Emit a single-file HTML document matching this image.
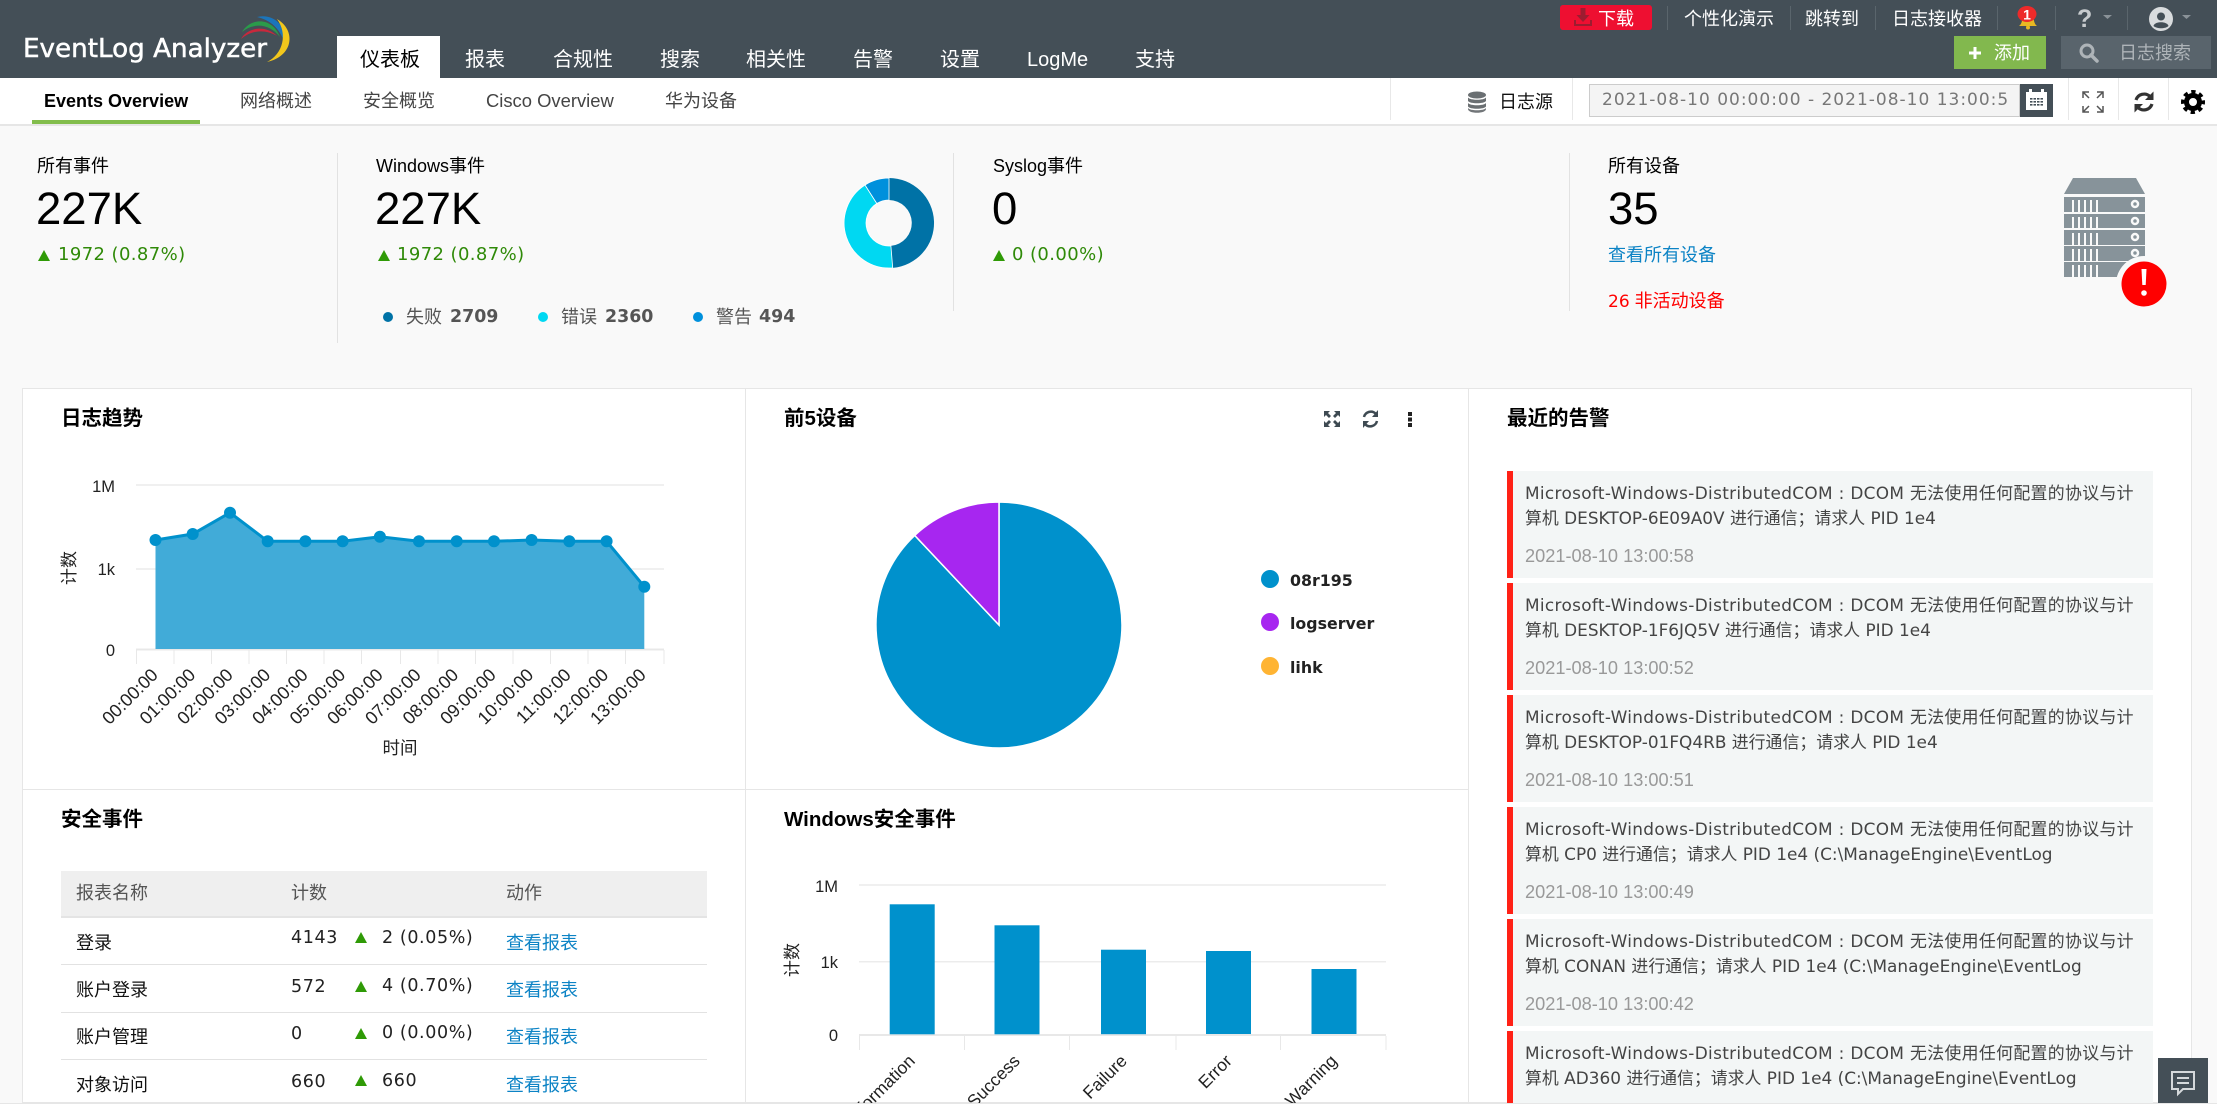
<!DOCTYPE html>
<html lang="zh">
<head>
<meta charset="utf-8">
<title>EventLog Analyzer</title>
<style>
html,body{margin:0;padding:0;background:#f9f9f9}
body{position:relative;width:2217px;height:1109px;overflow:hidden;font-family:"Liberation Sans","Noto Sans CJK SC",sans-serif;color:#000}
.a{position:absolute}
.t{position:absolute;white-space:nowrap;line-height:24px;height:24px;font-size:18px}
.n{color:#fff;font-size:20px;top:48px}
.s{color:#444;font-size:18px;top:89px}
.w{color:#fff;font-size:18px;top:7px}
.v{width:1px;background:#5a656c;top:6px;height:24px}
.sv{width:1px;background:#e8e8e8;top:78px;height:42px}
.big{font-size:45.500px;line-height:50px;height:50px;top:184px}
.g{font-family:"DejaVu Sans",sans-serif;color:#2f8a08;font-size:18px;letter-spacing:.4px;top:243px}
.tri{position:absolute;width:0;height:0;border-left:6.5px solid transparent;border-right:6.5px solid transparent;border-bottom:11px solid #2f9a06}
.h{font-size:20.5px;font-weight:bold}
.lg{font-size:18px;color:#555}
.lb{font-family:"DejaVu Sans",sans-serif;font-weight:bold;font-size:17.4px;color:#555}
.dot{position:absolute;border-radius:50%}
.item{position:absolute;left:1507px;width:646px;height:107px;background:#f3f6f6;box-sizing:border-box;border-left:6px solid #ff2116}
.item div{position:absolute;left:12px;white-space:nowrap;font-family:"DejaVu Sans","Noto Sans CJK SC",sans-serif;font-size:16.9px;line-height:24px;color:#444}
.item .l1{top:10px;letter-spacing:.33px}.item .l2{top:35px}.item .l3{top:73px;color:#999;font-family:"Liberation Sans",sans-serif;font-size:18.2px}
.row{font-size:18px;color:#111}
.num{font-family:"DejaVu Sans",sans-serif;font-size:17.500px;letter-spacing:.6px;color:#222}
.lnk{color:#0c83c5}
svg text{font-family:"Liberation Sans","Noto Sans CJK SC",sans-serif}
</style>
</head>
<body>
<!-- header -->
<div class="a" style="left:0;top:0;width:2217px;height:78px;background:#444f57"></div>
<svg class="a" style="left:0;top:0" width="320" height="78">
<text x="23" y="57" font-size="25.5" fill="#fff" stroke="#fff" stroke-width=".5" style="font-family:'DejaVu Sans',sans-serif" textLength="244" lengthAdjust="spacingAndGlyphs">EventLog Analyzer</text>
<path d="M241 39C247 28 265 24 277 36C265 29 251 30 241 39Z" fill="#c8283c"/>
<path d="M242 32C250 18 272 16 280 37C270 24 254 22 242 32Z" fill="#2a9b4a"/>
<path d="M257 17C272 13 288 25 285 44C280 28 270 20 257 17Z" fill="#1b75bb"/>
<path d="M277 19C296 30 294 56 267 62C283 54 288 34 277 19Z" fill="#f2c71c"/>
</svg>
<div class="a" style="left:337px;top:36px;width:103px;height:42px;background:#fff"></div>
<div class="t n" style="left:360px;color:#000">仪表板</div>
<div class="t n" style="left:465px">报表</div>
<div class="t n" style="left:553px">合规性</div>
<div class="t n" style="left:660px">搜索</div>
<div class="t n" style="left:746px">相关性</div>
<div class="t n" style="left:853px">告警</div>
<div class="t n" style="left:940px">设置</div>
<div class="t n" style="left:1027px">LogMe</div>
<div class="t n" style="left:1135px">支持</div>

<div class="a" style="left:1560px;top:5px;width:92px;height:25px;background:#ee0f31;border-radius:3px"></div>
<svg class="a" style="left:1572px;top:7px" width="24" height="22"><path d="M8.500 1h5v7h4l-6.500 7-6.500-7h4z M2 13v6h18v-6h-2v4H4v-4z" fill="#9c1c30"/></svg>
<div class="t w" style="left:1598px">下载</div>
<div class="a v" style="left:1667px"></div>
<div class="t w" style="left:1684px">个性化演示</div>
<div class="a v" style="left:1790px"></div>
<div class="t w" style="left:1805px">跳转到</div>
<div class="a v" style="left:1875px"></div>
<div class="t w" style="left:1892px">日志接收器</div>
<div class="a v" style="left:1997px"></div>
<svg class="a" style="left:2010px;top:2px" width="34" height="30">
<path d="M9 24c3-2 3-6 4-10h10c1 4 1 8 4 10z" fill="#e8b923"/><circle cx="18" cy="25.500" r="2" fill="#e8b923"/>
<ellipse cx="17" cy="12" rx="9.500" ry="8" fill="#ee2a2a"/>
<text x="17" y="17.500" fill="#fff" font-size="14" font-weight="bold" text-anchor="middle">1</text>
</svg>
<div class="a v" style="left:2055px"></div>
<div class="t" style="left:2077px;top:7px;color:#c6cacd;font-size:25px;font-weight:bold">?</div>
<svg class="a" style="left:2102px;top:14px" width="12" height="8"><path d="M1 1h9L5.500 5z" fill="#8a9298"/></svg>
<div class="a v" style="left:2127px"></div>
<svg class="a" style="left:2148px;top:6px" width="26" height="26"><circle cx="13" cy="13" r="12" fill="#d9dcde"/><circle cx="13" cy="10.500" r="4" fill="#444f57"/><path d="M5.500 20c1-5 14-5 15 0-3 3-12 3-15 0z" fill="#444f57"/></svg>
<svg class="a" style="left:2181px;top:14px" width="12" height="8"><path d="M1 1h9L5.500 5z" fill="#8a9298"/></svg>

<div class="a" style="left:1954px;top:36px;width:92px;height:33px;background:#82b84e"></div>
<svg class="a" style="left:1968px;top:46px" width="14" height="14"><path d="M5.500 1h3v4.500H13v3H8.500V13h-3V8.500H1v-3h4.500z" fill="#fff"/></svg>
<div class="t" style="left:1994px;top:41px;color:#fff;font-size:18px">添加</div>
<div class="a" style="left:2061px;top:36px;width:150px;height:33px;background:#59646c"></div>
<svg class="a" style="left:2078px;top:42px" width="22" height="22"><circle cx="9" cy="9" r="6" fill="none" stroke="#aeb4b8" stroke-width="3"/><path d="M13 13l6 6" stroke="#aeb4b8" stroke-width="3.500" stroke-linecap="round"/></svg>
<div class="t" style="left:2119px;top:41px;color:#aeb4b8;font-size:18px">日志搜索</div>

<!-- subnav -->
<div class="a" style="left:0;top:78px;width:2217px;height:46px;background:#fff;border-bottom:2px solid #e6e6e6;box-sizing:content-box"></div>
<div class="a" style="left:32px;top:120px;width:168px;height:4px;background:#82bd4c"></div>
<div class="t" style="left:44px;top:89px;font-size:18px;font-weight:bold">Events Overview</div>
<div class="t s" style="left:240px">网络概述</div>
<div class="t s" style="left:363px">安全概览</div>
<div class="t s" style="left:486px;font-size:18.400px">Cisco Overview</div>
<div class="t s" style="left:665px">华为设备</div>
<div class="a sv" style="left:1390px"></div>
<svg class="a" style="left:1466px;top:90px" width="22" height="24" fill="#6a6f72"><ellipse cx="11" cy="5" rx="9" ry="3.500"/><path d="M2 7.500c2 3 16 3 18 0v3.500c-2 3-16 3-18 0z M2 13c2 3 16 3 18 0v3.500c-2 3-16 3-18 0z"/><path d="M2 18c2 3 16 3 18 0v1c0 5-18 5-18 0z" opacity=".95"/></svg>
<div class="t" style="left:1499px;top:90px;font-size:18px;color:#111">日志源</div>
<div class="a sv" style="left:1572px"></div>
<div class="a" style="left:1589px;top:84px;width:431px;height:33px;background:#f4f4f4;border:1px solid #ccc;box-sizing:border-box"></div>
<div class="t" style="left:1602px;top:88px;font-family:'DejaVu Sans',sans-serif;font-size:17px;letter-spacing:1px;color:#777;width:407px;overflow:hidden">2021-08-10 00:00:00 - 2021-08-10 13:00:5</div>
<div class="a" style="left:2020px;top:84px;width:33px;height:33px;background:#444f57"></div>
<svg class="a" style="left:2025px;top:88px" width="23" height="23"><path d="M1 4h3V1h3v3h9V1h3v3h3v18H1z" fill="#fff"/><path d="M3 8.500h17v11H3z" fill="#fff"/><g fill="#444f57"><rect x="5" y="10" width="13" height="1.600"/><rect x="5" y="13" width="13" height="1.600"/><rect x="5" y="16" width="13" height="1.600"/></g><g stroke="#fff" stroke-width="1"><path d="M8 10v8M11.500 10v8M15 10v8"/></g></svg>
<div class="a sv" style="left:2068px"></div>
<svg class="a" style="left:2081px;top:90px" width="24" height="24" fill="none" stroke="#555" stroke-width="1.500"><path d="M2 8V2h6M2 2l6 6M16 2h6v6M22 2l-6 6M2 16v6h6M2 22l6-6M22 16v6h-6M22 22l-6-6"/></svg>
<div class="a sv" style="left:2118px"></div>
<svg class="a" style="left:2132px;top:90px" width="24" height="24" fill="none" stroke="#333" stroke-width="3.200"><path d="M4 10a8.500 8.500 0 0 1 14-3.500"/><path d="M20 14a8.500 8.500 0 0 1-14 3.500"/><path d="M21.500 1.500v8.500h-8.500z M2.500 22.500v-8.500h8.500z" fill="#333" stroke="none"/></svg>
<div class="a sv" style="left:2168px"></div>
<svg class="a" style="left:2180px;top:89px" width="26" height="26"><circle cx="13" cy="13" r="6.500" fill="none" stroke="#000" stroke-width="5"/><circle cx="13" cy="13" r="10" fill="none" stroke="#000" stroke-width="4" stroke-dasharray="4.200 3.650" stroke-dashoffset="2"/></svg>

<!-- stats -->
<div class="t" style="left:37px;top:154px">所有事件</div>
<div class="t big" style="left:36px">227K</div>
<div class="tri" style="left:38px;top:250px"></div>
<div class="t g" style="left:58px">1972 (0.87%)</div>
<div class="a" style="left:337px;top:153px;width:1px;height:190px;background:#e2e2e2"></div>

<div class="t" style="left:376px;top:154px">Windows事件</div>
<div class="t big" style="left:375px">227K</div>
<div class="tri" style="left:378px;top:250px"></div>
<div class="t g" style="left:397px">1972 (0.87%)</div>
<svg class="a" style="left:840px;top:174px" width="98" height="98">
<g transform="translate(49 49)">
<path d="M0-45A45 45 0 0 1 3.700 44.850L1.900 22.900A23 23 0 0 0 0-23Z" fill="#0072a6"/>
<path d="M3.700 44.850A45 45 0 0 1-24 -38L-12.200-19.500A23 23 0 0 0 1.900 22.900Z" fill="#00d8f2" stroke="#fff" stroke-width=".8"/>
<path d="M-24-38A45 45 0 0 1 0-45L0-23A23 23 0 0 0-12.200-19.500Z" fill="#0090dc" stroke="#fff" stroke-width=".8"/>
</g></svg>
<div class="dot" style="left:383px;top:312px;width:10px;height:10px;background:#0072a6"></div>
<div class="t lg" style="left:406px;top:305px">失败</div>
<div class="t lb" style="left:450px;top:305px">2709</div>
<div class="dot" style="left:538px;top:312px;width:10px;height:10px;background:#00d8f2"></div>
<div class="t lg" style="left:561px;top:305px">错误</div>
<div class="t lb" style="left:605px;top:305px">2360</div>
<div class="dot" style="left:693px;top:312px;width:10px;height:10px;background:#0090dc"></div>
<div class="t lg" style="left:716px;top:305px">警告</div>
<div class="t lb" style="left:759px;top:305px">494</div>
<div class="a" style="left:953px;top:153px;width:1px;height:158px;background:#e2e2e2"></div>

<div class="t" style="left:993px;top:154px">Syslog事件</div>
<div class="t big" style="left:992px">0</div>
<div class="tri" style="left:993px;top:250px"></div>
<div class="t g" style="left:1012px">0 (0.00%)</div>
<div class="a" style="left:1569px;top:153px;width:1px;height:158px;background:#e2e2e2"></div>

<div class="t" style="left:1608px;top:154px">所有设备</div>
<div class="t big" style="left:1608px">35</div>
<div class="t lnk" style="left:1608px;top:243px">查看所有设备</div>
<div class="t" style="left:1608px;top:289px;color:#f00"><span style="font-family:'DejaVu Sans',sans-serif;font-size:17px">26</span> 非活动设备</div>
<svg class="a" style="left:2060px;top:174px" width="120" height="140">
<g fill="#87939a">
<path d="M13 4H76L85 20H4Z"/>
<rect x="4" y="23" width="81" height="15"/><rect x="4" y="40" width="81" height="14"/><rect x="4" y="56" width="81" height="15"/><rect x="4" y="72" width="81" height="15"/><rect x="4" y="88" width="81" height="15"/>
</g>
<g fill="#f9f9f9">
<g id="b"><rect x="12" y="26" width="2" height="12"/><rect x="18" y="26" width="2" height="12"/><rect x="24" y="26" width="2" height="12"/><rect x="30" y="26" width="2" height="12"/><rect x="36" y="26" width="2" height="12"/></g>
<rect x="12" y="43" width="2" height="11"/><rect x="18" y="43" width="2" height="11"/><rect x="24" y="43" width="2" height="11"/><rect x="30" y="43" width="2" height="11"/><rect x="36" y="43" width="2" height="11"/>
<rect x="12" y="59" width="2" height="12"/><rect x="18" y="59" width="2" height="12"/><rect x="24" y="59" width="2" height="12"/><rect x="30" y="59" width="2" height="12"/><rect x="36" y="59" width="2" height="12"/>
<rect x="12" y="75" width="2" height="12"/><rect x="18" y="75" width="2" height="12"/><rect x="24" y="75" width="2" height="12"/><rect x="30" y="75" width="2" height="12"/><rect x="36" y="75" width="2" height="12"/>
<rect x="12" y="91" width="2" height="12"/><rect x="18" y="91" width="2" height="12"/><rect x="24" y="91" width="2" height="12"/><rect x="30" y="91" width="2" height="12"/><rect x="36" y="91" width="2" height="12"/>
</g>
<g fill="#87939a" stroke="#f9f9f9" stroke-width="2.500"><circle cx="75" cy="30" r="3"/><circle cx="75" cy="47" r="3"/><circle cx="75" cy="63" r="3"/><circle cx="75" cy="79" r="3"/></g>
<circle cx="84" cy="110" r="28" fill="#f9f9f9"/>
<circle cx="84" cy="110" r="22.500" fill="#f00"/>
<path d="M81.500 95h5l-.8 16h-3.400z" fill="#fff"/><circle cx="84" cy="119" r="2.800" fill="#fff"/>
</svg>

<!-- cards -->
<div class="a" style="left:22px;top:388px;width:2170px;height:715px;background:#fff;border:1px solid #e6e6e6;box-sizing:border-box"></div>
<div class="a" style="left:745px;top:388px;width:1px;height:715px;background:#e6e6e6"></div>
<div class="a" style="left:1468px;top:388px;width:1px;height:715px;background:#e6e6e6"></div>
<div class="a" style="left:22px;top:789px;width:1446px;height:1px;background:#e6e6e6"></div>
<div class="a" style="left:0;top:1103px;width:2217px;height:6px;background:#fff"></div>

<div class="t h" style="left:61px;top:407px">日志趋势</div>
<div class="t h" style="left:784px;top:407px">前5设备</div>
<div class="t h" style="left:1507px;top:407px">最近的告警</div>
<div class="t h" style="left:61px;top:808px">安全事件</div>
<div class="t h" style="left:784px;top:808px">Windows安全事件</div>

<!-- line chart -->
<svg class="a" style="left:0;top:0" width="760" height="790">
<g stroke="#ececec" stroke-width="1.500"><path d="M136 485H664M136 569H664"/></g>
<path d="M136 649.500H664" stroke="#e8e8e8" stroke-width="2"/>
<g stroke="#e8e8e8" stroke-width="1"><path d="M136.500 650v14M174 650v14M211.500 650v14M249 650v14M286.500 650v14M324 650v14M361.500 650v14M400.500 650v14M438 650v14M475.500 650v14M513 650v14M550.500 650v14M588 650v14M625.500 650v14M664 650v14"/></g>
<path d="M155.500 540L192.700 534L230 512.700L267.700 541.300L305.400 541.300L342.600 541.300L379.900 536.700L419 541.300L456.700 541.300L494 541.300L531.600 540L569.300 541.300L606.600 541.300L644.300 586.700V649H155.500Z" fill="#41abd8"/>
<path d="M155.500 540L192.700 534L230 512.700L267.700 541.300L305.400 541.300L342.600 541.300L379.900 536.700L419 541.300L456.700 541.300L494 541.300L531.600 540L569.300 541.300L606.600 541.300L644.300 586.700" fill="none" stroke="#0091cc" stroke-width="3"/>
<g fill="#0091cc"><circle cx="155.500" cy="540" r="6"/><circle cx="192.700" cy="534" r="6"/><circle cx="230" cy="512.700" r="6"/><circle cx="267.700" cy="541.300" r="6"/><circle cx="305.400" cy="541.300" r="6"/><circle cx="342.600" cy="541.300" r="6"/><circle cx="379.900" cy="536.700" r="6"/><circle cx="419" cy="541.300" r="6"/><circle cx="456.700" cy="541.300" r="6"/><circle cx="494" cy="541.300" r="6"/><circle cx="531.600" cy="540" r="6"/><circle cx="569.300" cy="541.300" r="6"/><circle cx="606.600" cy="541.300" r="6"/><circle cx="644.300" cy="586.700" r="6"/></g>
<g font-size="16.500" fill="#222" text-anchor="end"><text x="115" y="492">1M</text><text x="115" y="575">1k</text><text x="115" y="656">0</text></g>
<text transform="translate(75 568) rotate(-90)" font-size="17" text-anchor="middle" fill="#222">计数</text>
<g font-size="18" fill="#222" text-anchor="end">
<text transform="translate(159 676) rotate(-45)" text-anchor="end">00:00:00</text>
<text transform="translate(196.500 676) rotate(-45)" text-anchor="end">01:00:00</text>
<text transform="translate(234 676) rotate(-45)" text-anchor="end">02:00:00</text>
<text transform="translate(271.500 676) rotate(-45)" text-anchor="end">03:00:00</text>
<text transform="translate(309 676) rotate(-45)" text-anchor="end">04:00:00</text>
<text transform="translate(346.500 676) rotate(-45)" text-anchor="end">05:00:00</text>
<text transform="translate(384 676) rotate(-45)" text-anchor="end">06:00:00</text>
<text transform="translate(422 676) rotate(-45)" text-anchor="end">07:00:00</text>
<text transform="translate(459.500 676) rotate(-45)" text-anchor="end">08:00:00</text>
<text transform="translate(497 676) rotate(-45)" text-anchor="end">09:00:00</text>
<text transform="translate(534.500 676) rotate(-45)" text-anchor="end">10:00:00</text>
<text transform="translate(572 676) rotate(-45)" text-anchor="end">11:00:00</text>
<text transform="translate(609.500 676) rotate(-45)" text-anchor="end">12:00:00</text>
<text transform="translate(647 676) rotate(-45)" text-anchor="end">13:00:00</text>
</g>
<text x="400" y="754" font-size="17.500" text-anchor="middle" fill="#222">时间</text>
</svg>

<!-- pie -->
<svg class="a" style="left:760px;top:390px" width="708" height="399">
<path d="M239 235V112A123 123 0 1 1 154.700 145.400Z" fill="#0091cc" stroke="#fff" stroke-width="1.500"/>
<path d="M239 235L154.700 145.400A123 123 0 0 1 239 112Z" fill="#a726f0" stroke="#fff" stroke-width="1.500"/>
<circle cx="510" cy="189" r="9" fill="#0091cc"/><circle cx="510" cy="232" r="9" fill="#a726f0"/><circle cx="510" cy="276" r="9" fill="#ffb433"/>
<g font-size="15.800" font-weight="bold" fill="#222"><text x="530" y="196" style="font-family:'DejaVu Sans',sans-serif">08r195</text><text x="530" y="239" style="font-family:'DejaVu Sans',sans-serif">logserver</text><text x="530" y="283" style="font-family:'DejaVu Sans',sans-serif">lihk</text></g>
<g fill="#3e4a52"><path d="M564 21h6l-2 2 3 3-2 2-3-3-2 2z M580 21h-6l2 2-3 3 2 2 3-3 2 2z M564 37h6l-2-2 3-3-2-2-3 3-2-2z M580 37h-6l2-2-3-3 2-2 3 3 2-2z"/></g>
<g fill="none" stroke="#3e4a52" stroke-width="2.500"><path d="M604 27a7 7 0 0 1 12-3"/><path d="M617 31a7 7 0 0 1-12 3"/></g>
<path d="M618 20v7h-6z M603 38v-7h6z" fill="#3e4a52"/>
<g fill="#222"><rect x="648" y="22" width="4" height="4"/><rect x="648" y="27.500" width="4" height="4"/><rect x="648" y="33" width="4" height="4"/></g>
</svg>

<!-- alerts -->
<div class="item" style="top:471px"><div class="l1">Microsoft-Windows-DistributedCOM : DCOM 无法使用任何配置的协议与计</div><div class="l2">算机 DESKTOP-6E09A0V 进行通信；请求人 PID 1e4</div><div class="l3">2021-08-10 13:00:58</div></div>
<div class="item" style="top:583px"><div class="l1">Microsoft-Windows-DistributedCOM : DCOM 无法使用任何配置的协议与计</div><div class="l2">算机 DESKTOP-1F6JQ5V 进行通信；请求人 PID 1e4</div><div class="l3">2021-08-10 13:00:52</div></div>
<div class="item" style="top:695px"><div class="l1">Microsoft-Windows-DistributedCOM : DCOM 无法使用任何配置的协议与计</div><div class="l2">算机 DESKTOP-01FQ4RB 进行通信；请求人 PID 1e4</div><div class="l3">2021-08-10 13:00:51</div></div>
<div class="item" style="top:807px"><div class="l1">Microsoft-Windows-DistributedCOM : DCOM 无法使用任何配置的协议与计</div><div class="l2">算机 CP0 进行通信；请求人 PID 1e4 (C:\ManageEngine\EventLog</div><div class="l3">2021-08-10 13:00:49</div></div>
<div class="item" style="top:919px"><div class="l1">Microsoft-Windows-DistributedCOM : DCOM 无法使用任何配置的协议与计</div><div class="l2">算机 CONAN 进行通信；请求人 PID 1e4 (C:\ManageEngine\EventLog</div><div class="l3">2021-08-10 13:00:42</div></div>
<div class="item" style="top:1031px;height:72px"><div class="l1">Microsoft-Windows-DistributedCOM : DCOM 无法使用任何配置的协议与计</div><div class="l2">算机 AD360 进行通信；请求人 PID 1e4 (C:\ManageEngine\EventLog</div></div>
<div class="a" style="left:2158px;top:1058px;width:50px;height:45px;background:#444f57"></div>
<svg class="a" style="left:2158px;top:1058px" width="50" height="45" fill="none" stroke="#d5d9db" stroke-width="2"><path d="M14 14h22v17H25l-5 5v-5h-6z"/><path d="M19 20h12M19 25h12"/></svg>

<!-- table -->
<div class="a" style="left:61px;top:871px;width:646px;height:45px;background:#efefef"></div>
<div class="a" style="left:61px;top:916px;width:646px;height:2px;background:#e4e4e4"></div>
<div class="a" style="left:61px;top:964px;width:646px;height:1px;background:#e2e2e2"></div>
<div class="a" style="left:61px;top:1012px;width:646px;height:1px;background:#e2e2e2"></div>
<div class="a" style="left:61px;top:1059px;width:646px;height:1px;background:#e2e2e2"></div>
<div class="t" style="left:76px;top:881px;color:#555">报表名称</div>
<div class="t" style="left:291px;top:881px;color:#555">计数</div>
<div class="t" style="left:506px;top:881px;color:#555">动作</div>

<div class="t row" style="left:76px;top:931px">登录</div><div class="t num" style="left:291px;top:926px">4143</div><div class="tri" style="left:355px;top:932px"></div><div class="t num" style="left:382px;top:926px">2 (0.05%)</div><div class="t lnk" style="left:506px;top:931px">查看报表</div>
<div class="t row" style="left:76px;top:978px">账户登录</div><div class="t num" style="left:291px;top:975px">572</div><div class="tri" style="left:355px;top:981px"></div><div class="t num" style="left:382px;top:974px">4 (0.70%)</div><div class="t lnk" style="left:506px;top:978px">查看报表</div>
<div class="t row" style="left:76px;top:1025px">账户管理</div><div class="t num" style="left:291px;top:1022px">0</div><div class="tri" style="left:355px;top:1028px"></div><div class="t num" style="left:382px;top:1021px">0 (0.00%)</div><div class="t lnk" style="left:506px;top:1025px">查看报表</div>
<div class="t row" style="left:76px;top:1073px">对象访问</div><div class="t num" style="left:291px;top:1070px">660</div><div class="tri" style="left:355px;top:1075px"></div><div class="t num" style="left:382px;top:1069px">660</div><div class="t lnk" style="left:506px;top:1073px">查看报表</div>

<!-- bar chart -->
<svg class="a" style="left:0;top:0" width="1468" height="1103">
<g stroke="#ececec" stroke-width="1.500"><path d="M859 885H1386M859 961.700H1386"/></g>
<path d="M859 1035H1386" stroke="#e8e8e8" stroke-width="2"/>
<g stroke="#e8e8e8"><path d="M859.500 1036v14M964.500 1036v14M1069.500 1036v14M1176 1036v14M1280.500 1036v14M1386 1036v14"/></g>
<g fill="#0091cc"><rect x="889.700" y="904.300" width="45" height="130"/><rect x="994.500" y="925.300" width="45" height="109"/><rect x="1101" y="949.700" width="45" height="84.500"/><rect x="1206" y="951" width="45" height="83"/><rect x="1311.500" y="969" width="45" height="65"/></g>
<g font-size="16.500" fill="#222" text-anchor="end"><text x="838" y="892">1M</text><text x="838" y="968">1k</text><text x="838" y="1041">0</text></g>
<text transform="translate(798 960) rotate(-90)" font-size="17" text-anchor="middle" fill="#222">计数</text>
<g font-size="17.500" fill="#222">
<text transform="translate(916 1062) rotate(-45)" text-anchor="end">Information</text>
<text transform="translate(1021 1062) rotate(-45)" text-anchor="end">Success</text>
<text transform="translate(1128 1062) rotate(-45)" text-anchor="end">Failure</text>
<text transform="translate(1233 1062) rotate(-45)" text-anchor="end">Error</text>
<text transform="translate(1338 1062) rotate(-45)" text-anchor="end">Warning</text>
</g>
</svg>
<div class="a" style="left:0;top:1103px;width:2217px;height:6px;background:#fff;border-top:1px solid #e6e6e6;box-sizing:border-box"></div>
</body>
</html>
